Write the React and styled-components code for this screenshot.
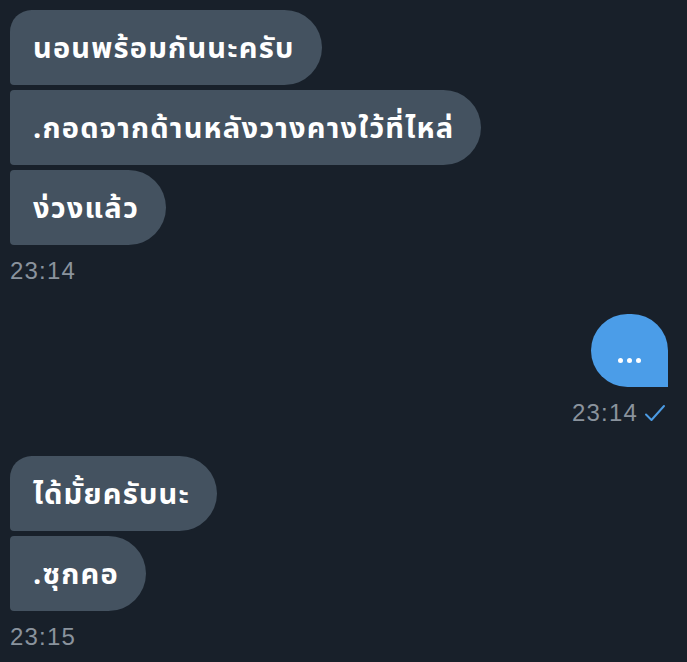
import React from 'react'
import styled, { createGlobalStyle, css } from 'styled-components'

const GlobalStyle = createGlobalStyle`
  html, body {
    margin: 0;
    padding: 0;
    background: #18202a;
  }
  * { box-sizing: border-box; }
`

const incoming = [
  {
    time: '23:14',
    messages: ['นอนพร้อมกันนะครับ', '.กอดจากด้านหลังวางคางใว้ที่ไหล่', 'ง่วงแล้ว'],
  },
]

const later = [
  {
    time: '23:15',
    messages: ['ได้มั้ยครับนะ', '.ซุกคอ'],
  },
]

function Group({ messages, time }) {
  return (
    <GroupBox>
      {messages.map((m, i) => (
        <Bubble key={i} $first={i === 0} $last={i === messages.length - 1}>
          {m}
        </Bubble>
      ))}
      <Time>{time}</Time>
    </GroupBox>
  )
}

export default function App() {
  return (
    <>
      <GlobalStyle />
      <Page>
        {incoming.map((g, i) => <Group key={i} {...g} />)}
        <GroupBox $out>
          <OutBubble>
            <Dots>
              <span /><span /><span />
            </Dots>
          </OutBubble>
          <Time $out>
            23:14
            <svg width="22" height="18" viewBox="0 0 22 18" fill="none">
              <path d="M2 10.5 L7.5 16 L20 2" stroke="#4b9be4" strokeWidth="2" strokeLinecap="round" strokeLinejoin="round" />
            </svg>
          </Time>
        </GroupBox>
        {later.map((g, i) => <Group key={i} {...g} />)}
      </Page>
    </>
  )
}

const Page = styled.div`
  min-height: 100vh;
  padding: 10px 19px 10px 10px;
  display: flex;
  flex-direction: column;
  gap: 29px;
  font-family: "Noto Sans Thai", "Noto Sans", "Liberation Sans", sans-serif;
`

const GroupBox = styled.div`
  display: flex;
  flex-direction: column;
  align-items: ${p => (p.$out ? 'flex-end' : 'flex-start')};
  gap: 5px;
`

const Bubble = styled.div`
  height: 75px;
  display: flex;
  align-items: center;
  padding: 3px 27px 0 23px;
  background: #445260;
  color: #ffffff;
  font-size: 29px;
  font-weight: 700;
  letter-spacing: 1.2px;
  white-space: nowrap;
  border-radius: 4px 38px 38px 4px;
  ${p => p.$first && css`border-top-left-radius: 22px;`}
  ${p => p.$last && css`border-bottom-left-radius: 4px;`}
`

const OutBubble = styled.div`
  width: 77px;
  height: 73px;
  background: #4b9de8;
  border-radius: 37px 37px 0 37px;
  display: flex;
  align-items: center;
  justify-content: center;
`

const Dots = styled.div`
  display: flex;
  gap: 4px;
  margin-top: 20px;
  span {
    width: 5px;
    height: 5px;
    border-radius: 50%;
    background: #ffffff;
  }
`

const Time = styled.div`
  margin-top: 7px;
  display: flex;
  align-items: center;
  gap: 6px;
  height: 28px;
  line-height: 28px;
  font-family: "Liberation Sans", Arial, sans-serif;
  font-size: 24px;
  letter-spacing: 1.2px;
  color: #8a939d;
  ${p => p.$out && css`margin-right: 2px;`}
`
